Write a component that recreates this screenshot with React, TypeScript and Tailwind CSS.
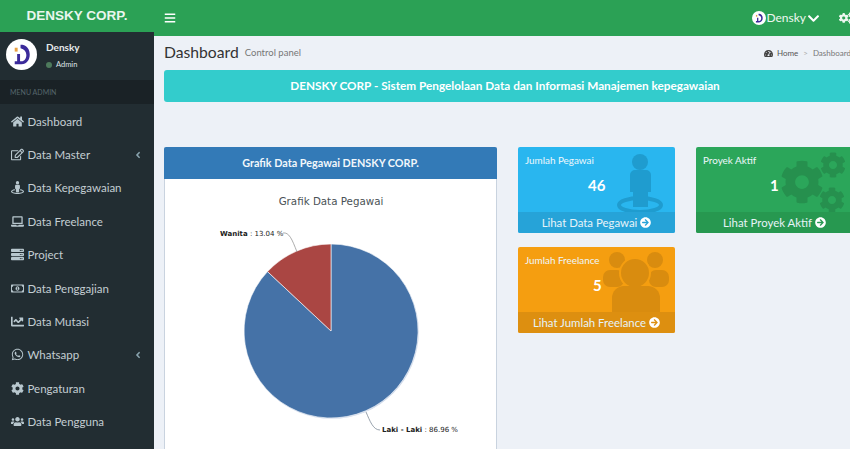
import React from "react";
import {
  FaBars, FaHome, FaRegEdit, FaStreetView, FaLaptop, FaServer, FaRegMoneyBillAlt, FaChartLine,
  FaWhatsapp, FaCog, FaUsers, FaCogs, FaAngleLeft, FaChevronDown, FaArrowCircleRight, FaTachometerAlt,
} from "react-icons/fa";

function Logo({ size }: { size: number }) {
  return (
    <svg width={size} height={size} viewBox="0 0 32 32" className="shrink-0">
      <circle cx="16" cy="16" r="16" fill="#fff" />
      <rect x="9" y="9" width="3" height="4" fill="#e8a040" />
      <path d="M15 6 h2 c5 1 7.500 5 7.500 10 c0 5.500 -3 10 -8.500 10 h-7 v-3 h2.500 v-7.500 h3 v7.500 h1.500 c3 0 5 -3 5 -6.500 c0 -3.500 -2 -6 -6 -7 z" fill="#3b2a9a" />
    </svg>
  );
}

const nav = [
  { label: "Dashboard", Icon: FaHome },
  { label: "Data Master", Icon: FaRegEdit, caret: true },
  { label: "Data Kepegawaian", Icon: FaStreetView },
  { label: "Data Freelance", Icon: FaLaptop },
  { label: "Project", Icon: FaServer },
  { label: "Data Penggajian", Icon: FaRegMoneyBillAlt },
  { label: "Data Mutasi", Icon: FaChartLine },
  { label: "Whatsapp", Icon: FaWhatsapp, caret: true },
  { label: "Pengaturan", Icon: FaCog },
  { label: "Data Pengguna", Icon: FaUsers },
];

function Sidebar() {
  return (
    <aside className="w-[154px] shrink-0 bg-[#222d32] flex flex-col">
      <div className="h-8 bg-[#2ba155] flex items-center justify-center text-[#e9f6ee] text-[13.500px] font-bold font-['Liberation_Sans',sans-serif]">
        DENSKY CORP.
      </div>
      <div className="h-12 flex pl-[6px] pt-[7px] gap-[9px] text-white">
        <Logo size={31} />
        <div className="flex flex-col pt-[1px]">
          <span className="text-[10px] leading-[14px] font-bold text-[#e5e9ea]">Densky</span>
          <span className="flex items-center gap-[4px] text-[7.500px] leading-[10px] mt-[6px] text-[#dfe4e6]">
            <span className="w-[6px] h-[6px] rounded-full bg-[#4d7a5c]" />
            Admin
          </span>
        </div>
      </div>
      <div className="h-[24px] bg-[#1a2226] flex items-center pl-[10px] text-[7px] text-[#56666c]">MENU ADMIN</div>
      <nav className="flex flex-col pt-[0.500px]">
        {nav.map(({ label, Icon, caret }) => (
          <div key={label} className="h-[33.400px] flex items-center pl-[11px] pr-[11px] text-[#c4ced2] text-[11.500px]">
            <span className="w-[16.500px] shrink-0 flex"><Icon className="text-[13px] text-[#b8c7ce]" /></span>
            <span className="flex-1 whitespace-nowrap">{label}</span>
            {caret && <FaAngleLeft className="text-[10px] text-[#8aa4af]" />}
          </div>
        ))}
      </nav>
    </aside>
  );
}

function StatBox({ title, value, link, bg, foot, icon, valueClass }: {
  title: string; value: string; link: string; bg: string; foot: string; icon: React.ReactNode; valueClass: string;
}) {
  return (
    <div className={`${bg} w-[157px] h-[86px] rounded-[2px] flex flex-col overflow-hidden relative text-white`}>
      <div className="flex-1 relative px-[7px] pt-[6px]">
        <div className="text-[9.900px] leading-[14px] text-[#eef8fc] relative z-10">{title}</div>
        <div className={`${valueClass} text-[15px] leading-[20px] font-bold relative z-10`}>{value}</div>
        {icon}
      </div>
      <div className={`${foot} h-[21px] relative z-10 flex items-center justify-center gap-[3px] text-[11.400px] text-[#e6f3f8] whitespace-nowrap`}>
        {link}
        <FaArrowCircleRight className="text-[11px] text-white" />
      </div>
    </div>
  );
}

function PersonArt() {
  return (
    <svg width="157" height="65" viewBox="0 0 157 65" className="absolute left-0 top-0" fill="#1f9ccf">
      <ellipse cx="122" cy="58" rx="21" ry="7" fill="none" stroke="#1f9ccf" strokeWidth="4" />
      <circle cx="122" cy="15" r="8" />
      <path d="M112 28 a5 5 0 0 1 5 -5 h11 a5 5 0 0 1 5 5 v17 h-3 v15 h-15 v-15 h-3 z" />
    </svg>
  );
}

function GearArt() {
  return (
    <>
      <FaCog className="absolute left-[84px] top-[13px] text-[44px] text-[#26904e]" />
      <FaCog className="absolute left-[124px] top-[5px] text-[26px] text-[#26904e]" />
      <FaCog className="absolute left-[123px] top-[40px] text-[26px] text-[#26904e]" />
    </>
  );
}

function GroupArt() {
  return (
    <svg width="157" height="65" viewBox="0 0 157 65" className="absolute left-0 top-0" fill="#d98c0f">
      <circle cx="99" cy="13" r="8" />
      <circle cx="137" cy="13" r="8" />
      <rect x="85" y="23" width="21" height="17" rx="7" />
      <rect x="131" y="23" width="20" height="17" rx="7" />
      <circle cx="117" cy="26" r="15" stroke="#f59e10" strokeWidth="2" />
      <path d="M94 65 v-14 a12 12 0 0 1 12 -12 h24 a12 12 0 0 1 12 12 v14 z" />
    </svg>
  );
}

function Pie() {
  return (
    <svg width="331" height="272" viewBox="0 0 331 272" className="block">
      <text x="166" y="26" textAnchor="middle" fontFamily="'DejaVu Sans', sans-serif" fontSize="10.300" fill="#4a5256">
        Grafik Data Pegawai
      </text>
      <circle cx="166.800" cy="152.800" r="87" fill="#cfd9ea" />
      <path d="M166 152 L166 65 A87 87 0 1 1 102.500 92.600 Z" fill="#4572a7" stroke="#fff" strokeWidth="0.600" />
      <path d="M166 152 L102.500 92.600 A87 87 0 0 1 166 65 Z" fill="#aa4643" stroke="#fff" strokeWidth="0.600" />
      <path d="M118 54 C 124 53 127 60 132 73" fill="none" stroke="#8a8a8a" strokeWidth="0.700" />
      <path d="M201 233 C 205 242 208 251 215 251" fill="none" stroke="#6b7a8a" strokeWidth="0.700" />
      <text x="55" y="57" fontFamily="'DejaVu Sans', sans-serif" fontSize="7" fill="#222">
        <tspan fontWeight="700">Wanita</tspan><tspan> : 13.04 %</tspan>
      </text>
      <text x="217" y="253" fontFamily="'DejaVu Sans', sans-serif" fontSize="7" fill="#222">
        <tspan fontWeight="700">Laki - Laki</tspan><tspan> : 86.96 %</tspan>
      </text>
    </svg>
  );
}

export default function App() {
  return (
    <div className="w-[850px] h-[449px] overflow-hidden flex bg-[#edf1f7] font-['Lato',sans-serif]">
      <Sidebar />
      <main className="flex-1 min-w-0 flex flex-col">
        <header className="h-9 shrink-0 bg-[#2ba155] flex items-center pl-[10px] text-white">
          <FaBars className="text-[12px]" />
          <div className="ml-auto flex items-center">
            <Logo size={14} />
            <span className="text-[12px] text-[#eef7f1]">Densky</span>
            <FaChevronDown className="ml-[1px] text-[13px]" />
            <FaCogs className="ml-[19px] mr-[-3px] text-[14px] text-[#eef7f1]" />
          </div>
        </header>
        <div className="w-[706px] shrink-0 pl-[10px]">
          <div className="h-[34px] flex items-center pb-[3px]">
            <h1 className="text-[15.700px] leading-[20px] text-[#333]">Dashboard</h1>
            <span className="ml-[6px] mt-[3px] text-[9.500px] text-[#777]">Control panel</span>
            <div className="ml-auto mr-[9px] mt-[3px] flex items-center text-[8px] text-[#555] whitespace-nowrap">
              <FaTachometerAlt className="text-[9px] mr-[4px] text-[#444]" />
              Home
              <span className="mx-[5px] text-[#aaa]">&gt;</span>
              <span className="text-[#777]">Dashboard</span>
            </div>
          </div>
          <div className="h-8 rounded-[3px] bg-[#33cccc] flex items-center justify-center pr-[14px] text-white text-[11.750px] font-bold whitespace-nowrap">
            DENSKY CORP - Sistem Pengelolaan Data dan Informasi Manajemen kepegawaian
          </div>
          <div className="flex mt-[45px] items-start">
            <section className="w-[333px] shrink-0 bg-white border-x border-[#c9d3df] rounded-t-[2px]">
              <div className="mx-[-1px] h-8 bg-[#337ab7] rounded-t-[2px] flex items-center justify-center text-[#f1f7fb] text-[10.800px] font-bold whitespace-nowrap">
                Grafik Data Pegawai DENSKY CORP.
              </div>
              <Pie />
            </section>
            <div className="ml-[21px] grid grid-cols-[157px_157px] gap-x-[21px] gap-y-[14px]">
              <StatBox
                title="Jumlah Pegawai" value="46" link="Lihat Data Pegawai"
                bg="bg-[#29b6ef]" foot="bg-[#26a3d8]" valueClass="ml-[63px] mt-[8px]"
                icon={<PersonArt />}
              />
              <StatBox
                title="Proyek Aktif" value="1" link="Lihat Proyek Aktif"
                bg="bg-[#2ba65a]" foot="bg-[#279850]" valueClass="ml-[67px] mt-[8px]"
                icon={<GearArt />}
              />
              <StatBox
                title="Jumlah Freelance" value="5" link="Lihat Jumlah Freelance"
                bg="bg-[#f59e10]" foot="bg-[#dd8f10]" valueClass="ml-[68px] mt-[8px]"
                icon={<GroupArt />}
              />
            </div>
          </div>
        </div>
      </main>
    </div>
  );
}
